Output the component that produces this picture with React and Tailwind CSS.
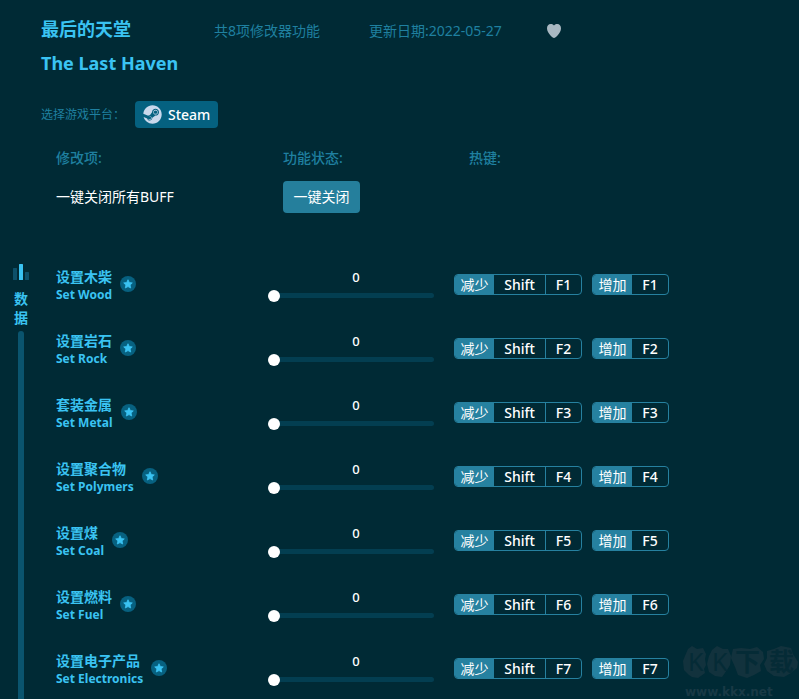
import { useState } from "react";
import { FaSteam } from "react-icons/fa";

const OPTIONS = [
  { id: "wood", name: "设置木柴", en: "Set Wood", hotkey: "F1" },
  { id: "rock", name: "设置岩石", en: "Set Rock", hotkey: "F2" },
  { id: "metal", name: "套装金属", en: "Set Metal", hotkey: "F3" },
  { id: "polymers", name: "设置聚合物", en: "Set Polymers", hotkey: "F4" },
  { id: "coal", name: "设置煤", en: "Set Coal", hotkey: "F5" },
  { id: "fuel", name: "设置燃料", en: "Set Fuel", hotkey: "F6" },
  { id: "electronics", name: "设置电子产品", en: "Set Electronics", hotkey: "F7" },
];

const HeartIcon = () => (
  <svg width="14" height="14" viewBox="0 0 14 14" fill="currentColor">
    <path d="M7 1.6C8 .4 9.200 0 10.300 0 12.500 0 14 1.800 14 4.300c0 2.700-1.500 5.200-3.500 7.200C9.200 12.800 8 14 7 14s-2.200-1.200-3.500-2.500C1.500 9.500 0 7 0 4.300 0 1.800 1.500 0 3.700 0 4.800 0 6 .4 7 1.600z" />
  </svg>
);

const StarIcon = () => (
  <svg
    width="10"
    height="10"
    viewBox="0 0 10 10"
    fill="currentColor"
    stroke="currentColor"
    strokeWidth="0.8"
    strokeLinejoin="round"
  >
    <path d="M5 .7l1.300 2.800 3 .4-2.200 2.100.6 3L5 7.600 2.300 9l.6-3L.7 3.900l3-.4z" />
  </svg>
);

const Hotkey = ({ action, keys }) => {
  return (
    <div className="flex h-[21px] overflow-hidden rounded border border-[#2681a0] text-sm leading-[19px] text-white">
      <span className="w-[39px] bg-[#2681a0] text-center">{action}</span>
      {keys.map((key, i) => (
        <kbd
          key={key}
          className={`font-[inherit] font-medium text-center ${
            i > 0 ? "border-l border-[#2681a0]" : ""
          } ${key === "Shift" ? "w-[51px]" : "w-9"}`}
        >
          {key}
        </kbd>
      ))}
    </div>
  );
};

const OptionRow = ({ option, value, onChange }) => {
  return (
    <div className="grid h-16 grid-cols-[218px_180px_1fr] items-center">
      <div className="flex items-center gap-2">
        <label
          htmlFor={option.id}
          className="flex flex-col pt-1 leading-[18px] font-bold text-[#3ac3f2]"
        >
          <span className="text-sm leading-[18px]">{option.name}</span>
          <span className="text-xs leading-[18px]">{option.en}</span>
        </label>
        <button
          type="button"
          aria-label="收藏"
          className="flex size-4 items-center justify-center rounded-full bg-[#076180] text-[#3ac3f2]"
        >
          <StarIcon />
        </button>
      </div>
      <div className="flex w-40 flex-col gap-1 pt-[2px]">
        <output
          htmlFor={option.id}
          className="pl-1 text-center text-[13px] leading-4 font-medium text-white"
        >
          {value}
        </output>
        <input
          id={option.id}
          type="range"
          min="0"
          max="100"
          value={value}
          onChange={(e) => onChange(option.id, Number(e.target.value))}
          className="h-3 w-full cursor-pointer appearance-none bg-transparent [&::-webkit-slider-runnable-track]:h-[5px] [&::-webkit-slider-runnable-track]:rounded-full [&::-webkit-slider-runnable-track]:bg-[#033e51] [&::-webkit-slider-thumb]:-mt-[3px] [&::-webkit-slider-thumb]:-ml-[6px] [&::-webkit-slider-thumb]:size-3 [&::-webkit-slider-thumb]:appearance-none [&::-webkit-slider-thumb]:rounded-full [&::-webkit-slider-thumb]:bg-white"
        />
      </div>
      <div className="flex gap-[10px]">
        <Hotkey action="减少" keys={["Shift", option.hotkey]} />
        <Hotkey action="增加" keys={[option.hotkey]} />
      </div>
    </div>
  );
};

const Watermark = () => {
  return (
    <svg
      className="pointer-events-none absolute right-0 bottom-0"
      width="118"
      height="70"
      viewBox="0 -14 118 70"
      aria-hidden="true"
    >
      <g fill="#12323d">
        <path d="M7 6l4-3 5 3 6-1 3 6-1 5 1 6-2 4 1 4-7 5-6-1-3-2-5-5-1-9 2-5z" />
        <path d="M31 7l5-4 6 3 5 0 3 7-1 9-3 5-5 7-7-1-6-4-2-8 2-8z" />
        <path d="M52 6l8-1 9 1 7-2 6 5 1 7-4 6 1 6-7 4-7 3-9-3-3-8-4-9z" />
        <path d="M86 8l7-2 7-3 10 2 2 6 5 8-1 6-6 5-7 4-10-1-7-5-3-7 3-6z" />
      </g>
      <g
        fill="#052b36"
        fontFamily="'Noto Sans', 'Noto Sans CJK SC', sans-serif"
      >
        <text x="7" y="28" fontSize="25">K</text>
        <text x="31" y="28" fontSize="25">K</text>
        <text x="54" y="28" fontSize="25" fontWeight="bold">下</text>
        <text x="88" y="28" fontSize="25" fontWeight="bold">载</text>
      </g>
      <text
        x="4"
        y="53"
        fontSize="12"
        fontWeight="bold"
        fontFamily="'DejaVu Sans', sans-serif"
        fill="#183945"
      >
        www.kkx.net
      </text>
    </svg>
  );
};

const App = () => {
  const [values, setValues] = useState({});

  const handleChange = (id, value) => {
    setValues((prev) => ({ ...prev, [id]: value }));
  };

  return (
    <div className="relative flex min-h-screen flex-col overflow-hidden bg-[#002a35] font-['Noto_Sans','Noto_Sans_CJK_SC',sans-serif]">
      <header className="pt-3 pl-[41px]">
        <div className="flex items-start">
          <h1 className="w-[173px] text-lg leading-[34px] font-bold whitespace-nowrap text-[#3ac3f2]">
            最后的天堂
            <br />
            The Last Haven
          </h1>
          <div className="flex h-[38px] items-center text-sm text-[#1f80a0]">
            <span className="w-[155px]">共8项修改器功能</span>
            <span className="w-[178px]">更新日期:2022-05-27</span>
            <button type="button" aria-label="喜欢" className="text-[#a9b8c2]">
              <HeartIcon />
            </button>
          </div>
        </div>
        <div className="mt-[21px] flex items-center text-xs text-[#1f80a0]">
          <span className="w-[94px]">选择游戏平台：</span>
          <button
            type="button"
            className="flex h-[27px] items-center gap-[6px] rounded bg-[#056180] px-2 text-sm font-medium text-white"
          >
            <FaSteam size={19} className="text-[#c9d8ec]" />
            Steam
          </button>
        </div>
      </header>

      <section className="mt-5 grid grid-cols-[227px_186px_1fr] items-center gap-y-[13px] pl-14 text-sm">
        <h2 className="font-medium text-[#1f80a0]">修改项:</h2>
        <h2 className="font-medium text-[#1f80a0]">功能状态:</h2>
        <h2 className="font-medium text-[#1f80a0]">热键:</h2>
        <span className="text-white">一键关闭所有BUFF</span>
        <button
          type="button"
          onClick={() => setValues({})}
          className="h-8 w-[77px] rounded bg-[#257f9c] text-white"
        >
          一键关闭
        </button>
      </section>

      <main className="mt-[39px] -mb-px flex flex-1">
        <aside className="flex w-[42px] flex-col items-center pt-3">
          <svg width="16" height="16" viewBox="0 0 16 16" aria-hidden="true">
            <rect x="0" y="4" width="4" height="12" rx="0.5" fill="#0d506a" />
            <rect x="6" y="0" width="4" height="16" rx="0.5" fill="#3ac3f2" />
            <rect x="12" y="8" width="4" height="8" rx="0.5" fill="#0d506a" />
          </svg>
          <h3 className="mt-[9px] w-4 text-center text-sm leading-[19px] font-bold text-[#3ac3f2]">
            数据
          </h3>
          <div className="mt-1 w-[6px] flex-1 rounded-t-full bg-[#0a546e]" />
        </aside>
        <div className="flex-1 pl-[14px]">
          {OPTIONS.map((option) => (
            <OptionRow
              key={option.id}
              option={option}
              value={values[option.id] ?? 0}
              onChange={handleChange}
            />
          ))}
        </div>
      </main>

      <Watermark />
    </div>
  );
};

export default App;
